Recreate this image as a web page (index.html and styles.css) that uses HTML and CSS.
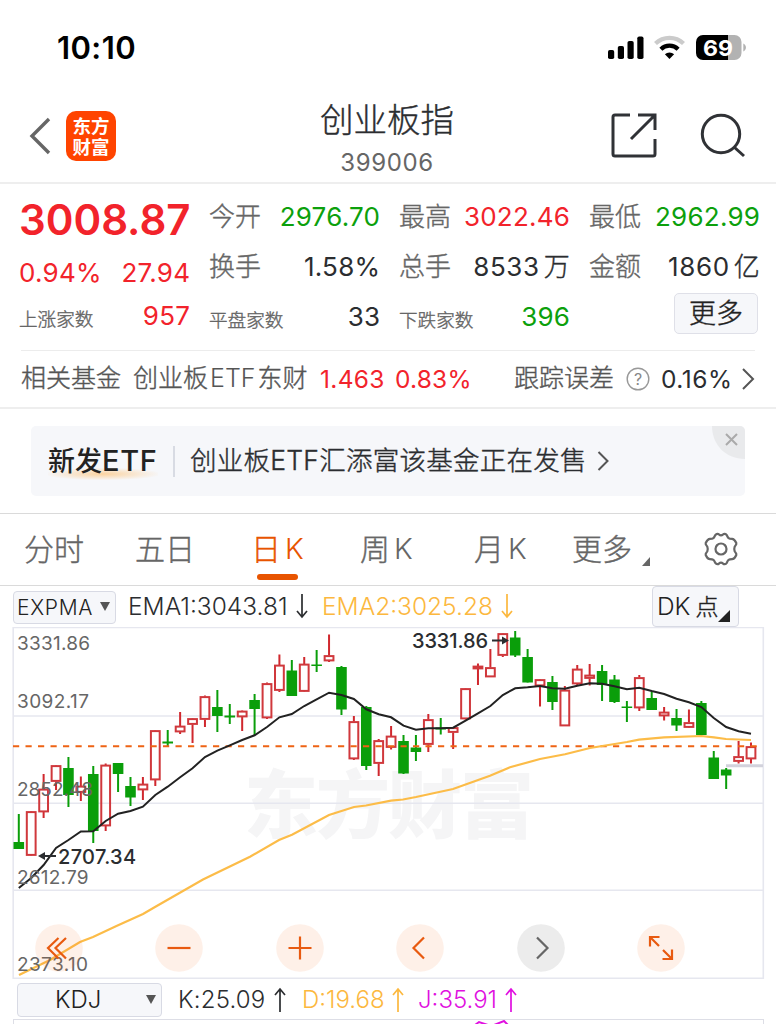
FILE: index.html
```html
<!DOCTYPE html>
<html lang="zh-CN">
<head>
<meta charset="utf-8">
<title>创业板指 399006</title>
<link rel="stylesheet" href="styles.css">
</head>
<body>
<div class="status">
  <span class="clock">10:10</span>
  <svg class="status-icons" width="140" height="26" viewBox="0 0 140 26">
    <rect x="0" y="15" width="6.2" height="9" rx="1.8"/>
    <rect x="9.8" y="11" width="6.2" height="13" rx="1.8"/>
    <rect x="19.5" y="6" width="6.2" height="18" rx="1.8"/>
    <rect x="29.3" y="1.5" width="6.2" height="22.5" rx="1.8"/>
    <g fill="none" stroke-width="4.2">
      <path d="M47.5 8.6a20 20 0 0 1 28 0" stroke="#cbcbcb"/>
      <path d="M52.9 14.2a12.2 12.2 0 0 1 17.2 0" stroke="#000"/>
    </g>
    <path d="M61.5 24l-4.6-4.7a6.7 6.7 0 0 1 9.2 0z"/>
    <path d="M95 0h25v25h-25a7 7 0 0 1-7-7V7a7 7 0 0 1 7-7z"/>
    <path d="M120 0h6.500a7 7 0 0 1 7 7v11a7 7 0 0 1-7 7h-6.500z" fill="#b2b2b2"/>
    <path d="M135.300 8.500c3.500 1.500 3.500 6.500 0 8z" fill="#b2b2b2"/>
    <text x="110" y="20.700" class="battery" textLength="30" lengthAdjust="spacingAndGlyphs">69</text>
  </svg>
</div>

<header class="nav">
  <svg class="back" width="24" height="38" viewBox="0 0 24 38"><path d="M20 2L3 19l17 17"/></svg>
  <div class="logo">东方<br>财富</div>
  <div class="title"><h1>创业板指</h1><p>399006</p></div>
  <svg class="share" width="46" height="46" viewBox="0 0 46 46"><path d="M19 2H4a2 2 0 0 0-2 2v37a2 2 0 0 0 2 2h38a2 2 0 0 0 2-2V26M27 2h17v15M43 3L20 26"/></svg>
  <svg class="search" width="46" height="46" viewBox="0 0 46 46"><circle cx="21" cy="21" r="18.700"/><path d="M34 34l10 9"/></svg>
</header>

<section class="quote">
  <div class="col first">
    <div class="price red">3008.87</div>
    <div class="cell change red"><b>0.94%</b><b>27.94</b></div>
    <div class="cell small"><i>上涨家数</i><b class="red">957</b></div>
  </div>
  <div class="col">
    <div class="cell"><i>今开</i><b class="green">2976.70</b></div>
    <div class="cell"><i>换手</i><b>1.58%</b></div>
    <div class="cell small"><i>平盘家数</i><b>33</b></div>
  </div>
  <div class="col">
    <div class="cell"><i>最高</i><b class="red">3022.46</b></div>
    <div class="cell"><i>总手</i><b class="unit">8533<em>万</em></b></div>
    <div class="cell small"><i>下跌家数</i><b class="green">396</b></div>
  </div>
  <div class="col">
    <div class="cell"><i>最低</i><b class="green">2962.99</b></div>
    <div class="cell"><i>金额</i><b class="unit">1860<em>亿</em></b></div>
    <div class="cell more-cell"><button class="more">更多</button></div>
  </div>
</section>

<section class="fund">
  <span class="f-label">相关基金</span>
  <span class="f-name">创业板<em>ETF</em>东财</span>
  <span class="f-num red">1.463</span>
  <span class="f-pct red">0.83%</span>
  <span class="f-track">跟踪误差</span>
  <svg class="help" width="24" height="24" viewBox="0 0 24 24"><circle cx="12" cy="12" r="10.800"/><text x="12" y="17.500">?</text></svg>
  <span class="f-err">0.16%</span>
  <svg class="chev" width="14" height="24" viewBox="0 0 14 24"><path d="M2 2l10 10L2 22"/></svg>
</section>

<section class="promo">
  <div class="banner">
    <strong>新发<em>ETF</em></strong>
    <span class="bar"></span>
    <span class="promo-text">创业板ETF汇添富该基金正在发售</span>
    <svg class="chev" width="12" height="22" viewBox="0 0 12 22"><path d="M1.500 2l9 9-9 9"/></svg>
    <svg class="close" width="33" height="33" viewBox="0 0 33 33"><path class="corner" d="M0 0h28a5 5 0 0 1 5 5v28C14 33 0 19 0 0z"/><path class="x" d="M14 8l11 11M25 8L14 19"/></svg>
  </div>
</section>

<nav class="tabs">
  <span>分时</span>
  <span>五日</span>
  <span class="active">日<em>K</em></span>
  <span>周<em>K</em></span>
  <span>月<em>K</em></span>
  <span>更多<svg class="tri" width="8" height="9" viewBox="0 0 8 9"><path d="M8 0v9H0z"/></svg></span>
  <svg class="gear" width="36" height="36" viewBox="0 0 36 36"><path d="M12.200 4.200c1.500-1.900 3-1.500 3.700-.8 1.300 1.100 2.900 1.100 4.200 0 .9-.8 2.500-1 3.700.8 1.200 2.700 1.800 3.600 5.300 3.600 2.300 0 3.300 2.200 4.200 4.200.5 1.700-1.100 2.500-1.600 3.600-.6 1.600-.6 3.200 0 4.800.5 1.100 2.100 1.900 1.600 3.600-.9 2-1.900 4.200-4.200 4.200-3.500 0-4.100.9-5.300 3.600-1.200 1.800-2.800 1.600-3.700.8-1.300-1.100-2.900-1.100-4.200 0-.7.700-2.200 1.100-3.700-.8C11 29.100 10.400 28.200 6.900 28.200c-2.300 0-3.300-2.200-4.200-4.200-.5-1.700 1.100-2.500 1.600-3.600.6-1.600.6-3.200 0-4.800C3.800 14.500 2.200 13.700 2.700 12c.9-2 1.900-4.200 4.200-4.200 3.500 0 4.100-.9 5.300-3.600z"/><circle cx="18" cy="18" r="5.500"/></svg>
</nav>

<section class="indicator">
  <span class="select expma">EXPMA<svg width="10" height="10" viewBox="0 0 10 10"><path d="M0 0h10L5 9z"/></svg></span>
  <span class="ema1">EMA1:3043.81</span>
  <svg class="arrow" width="12" height="26" viewBox="0 0 12 26"><path d="M6 1v23M1 18l5 6 5-6"/></svg>
  <span class="ema2">EMA2:3025.28</span>
  <svg class="arrow gold" width="12" height="26" viewBox="0 0 12 26"><path d="M6 1v23M1 18l5 6 5-6"/></svg>
  <span class="dk">DK<em>点</em><svg width="12" height="12" viewBox="0 0 12 12"><path d="M12 0v12H0z"/></svg></span>
</section>

<section class="chart-wrap">
  <svg id="chart" class="chart" width="776" height="353" viewBox="0 627 776 353"></svg>
  <div class="controls">
    <svg viewBox="0 0 48 48"><circle cx="24" cy="24" r="23.800"/><path d="M23.500 14L13 24l10.500 10.500M31 14L20.500 24 31 34.500"/></svg>
    <svg viewBox="0 0 48 48"><circle cx="24" cy="24" r="23.800"/><path d="M12.500 24h23"/></svg>
    <svg viewBox="0 0 48 48"><circle cx="24" cy="24" r="23.800"/><path d="M12.500 24h23M24 12.500v23"/></svg>
    <svg viewBox="0 0 48 48"><circle cx="24" cy="24" r="23.800"/><path d="M28 13.500L17.500 24 28 34.500"/></svg>
    <svg class="off" viewBox="0 0 48 48"><circle cx="24" cy="24" r="23.800"/><path d="M20 13.500L30.500 24 20 34.500"/></svg>
    <svg viewBox="0 0 48 48"><circle cx="24" cy="24" r="23.800"/><path d="M22.500 13H13v9.500M13 13l9 9M35 25.500V35h-9.500M35 35l-9-9"/></svg>
  </div>
</section>

<section class="kdj-row">
  <span class="select kdj">KDJ<svg width="10" height="10" viewBox="0 0 10 10"><path d="M0 0h10L5 9z"/></svg></span>
  <span class="k">K:25.09</span>
  <svg class="arrow" width="12" height="26" viewBox="0 0 12 26"><path d="M6 25V2M1 8l5-6 5 6"/></svg>
  <span class="d">D:19.68</span>
  <svg class="arrow gold" width="12" height="26" viewBox="0 0 12 26"><path d="M6 25V2M1 8l5-6 5 6"/></svg>
  <span class="j">J:35.91</span>
  <svg class="arrow magenta" width="12" height="26" viewBox="0 0 12 26"><path d="M6 25V2M1 8l5-6 5 6"/></svg>
</section>
<div class="subchart"><svg width="40" height="5" viewBox="0 0 40 5"><path d="M1 5l4-3 9 3M20 5l10-4 4 4"/></svg></div>
<script src="chart.js"></script>
</body>
</html>
```
FILE: styles.css
```css
* { box-sizing: border-box; }
html, body { margin: 0; padding: 0; }
body {
  width: 776px; height: 1024px; overflow: hidden; background: #fff; color: #2b2d30;
  font-family: Inter, "Noto Sans CJK SC", sans-serif; font-weight: 400;
}
i, em { font-style: normal; font-weight: inherit; }
svg { display: block; flex: none; }
span { white-space: nowrap; }
.red { color: #f2232b; }
.green { color: #0ca00c; }
.title h1, .cell i, .unit em, .more, .f-label, .f-name, .f-track, .promo-text, .tabs span, .dk em { -webkit-text-stroke: .4px currentColor; }
.f-name em, .tabs em { -webkit-text-stroke: 0; }

.status { height: 96px; display: flex; justify-content: space-between; padding: 0 28px 0 57px; }
.clock { font-size: 31px; font-weight: 600; line-height: 96px; color: #000; letter-spacing: .4px; }
.status-icons { margin-top: 35px; }
.battery { font: 700 22px Inter, sans-serif; fill: #fff; text-anchor: middle; }

.nav { height: 88px; display: flex; border-bottom: 2px solid #eee; padding-left: 29px; }
.back { margin-top: 21px; }
.back path { fill: none; stroke: #666; stroke-width: 3.4; }
.logo {
  width: 50px; height: 50px; margin: 15px 0 0 13px; border-radius: 10px; background: #ff4400; color: #fff;
  text-align: center; padding-top: 4px;
  font: 700 18.500px/20.500px "Noto Sans CJK SC", sans-serif;
}
.title { width: 180px; margin-left: 181px; text-align: center; }
.title h1 { margin: 3px 0 0; font-size: 33.500px; font-weight: 300; line-height: 42px; }
.title p { margin: 7px 0 0; font-size: 24px; line-height: 30px; color: #666; letter-spacing: .6px; }
.share { margin: 17px 0 0 134px; }
.search { margin: 17px 0 0 43px; }
.share path, .search * { fill: none; stroke: #303236; stroke-width: 3; }

.quote { height: 166px; display: grid; grid-template-columns: repeat(4, 170px); column-gap: 20px; padding: 8px 0 0 20px; }
.cell { height: 50px; display: flex; justify-content: space-between; font-size: 26px; line-height: 50px; }
.cell b { font-weight: 400; letter-spacing: .25px; margin-right: -.25px; }
.cell i { color: #666; font-weight: 300; }
.col:not(.first) .cell:not(.small) i { margin-left: -1px; }
.cell.small i { font-size: 18.600px; line-height: 57px; margin-left: -1px; }
.unit { display: flex; gap: 4px; }
.unit em { font-weight: 300; }
.cell b.unit { letter-spacing: .6px; }
.price { height: 57px; margin-left: -1px; font-size: 42px; font-weight: 600; line-height: 56px; letter-spacing: 0; }
.change { height: 42px; line-height: 48px; margin-left: -1px; }
.first .small { height: 50px; }
.cell.small { margin-top: 0; line-height: 49px; }
.more-cell { justify-content: flex-end; padding: 1px 2px 0 0; }
.more {
  width: 84px; height: 41px; padding: 0; border: 1.500px solid #dfe0e8; border-radius: 5px; background: #f6f7fa;
  font: 300 27px/37px Inter, "Noto Sans CJK SC", sans-serif; color: #222;
}

.fund {
  height: 59px; display: flex; align-items: center; border-bottom: 2px solid #eee; padding-left: 21px;
  font-size: 24.500px; line-height: 30px; background: linear-gradient(#ececec, #ececec) 21px 0 / 734px 1px no-repeat;
}
.f-label, .f-name, .f-track { font-size: 25px; font-weight: 300; color: #555; margin-top: -2px; }
.f-name { margin-left: 12px; width: 175px; }
.f-name em { margin: 0 2px; font-weight: 350; }
.f-num { margin-left: 12px; width: 64px; letter-spacing: .3px; }
.f-pct { margin-left: 11px; width: 76px; letter-spacing: .2px; }
.f-track { margin-left: 43px; }
.help { margin-left: 12px; }
.help circle { fill: none; stroke: #999; stroke-width: 1.400; }
.help text { font: 400 16px Inter, sans-serif; fill: #888; text-anchor: middle; }
.f-err { margin-left: 11px; width: 72px; letter-spacing: .5px; }
.chev { margin-left: 8px; }
.chev path { fill: none; stroke: #555; stroke-width: 2; }

.promo { height: 105px; padding: 17px 31px 0; border-bottom: 1px solid #dadada; }
.banner {
  position: relative; width: 714px; height: 70px; border-radius: 5px; background: #f6f7fa;
  display: flex; align-items: center; padding-left: 17px; font-size: 26.500px;
}
.banner strong {
  font-size: 27px; font-weight: 500; width: 111px; line-height: 36px; color: #222;
  background: radial-gradient(ellipse at center, #fbd3a0 0, rgba(251, 211, 160, 0) 75%) 0 100% / 110px 12px no-repeat;
}
.banner strong em { font-size: 29px; letter-spacing: .7px; }
.bar { width: 2px; height: 31px; margin-left: 14px; background: #d8dbe3; }
.promo-text { margin-left: 15px; width: 399px; font-weight: 300; letter-spacing: .25px; line-height: 36px; margin-top: -3px; }
.close { position: absolute; top: 0; right: 0; }
.corner { fill: #e9eaec; }
.x { stroke: #aaa; stroke-width: 2; }

.tabs {
  height: 72px; border-bottom: 1px solid #dadada; padding-left: 24px; color: #666; font-size: 30px; font-weight: 300;
  display: grid; grid-template-columns: 111px 116px 109px 114px 98px 131px 36px; align-items: start;
}
.tabs span { display: flex; line-height: 70px; height: 66px; gap: 4px; }
.tabs em { font-size: 29px; font-weight: 350; }
.tabs .active { color: #e85400; width: 51px; position: relative; }
.active::after { content: ""; position: absolute; left: 6px; bottom: 0; width: 41px; height: 6px; border-radius: 3px; background: #e85400; }
.tri { margin: 43px 0 0 6px; fill: #666; }
.gear { margin-top: 17px; fill: none; stroke: #666; stroke-width: 2.200; }

.indicator { height: 40px; display: flex; align-items: center; padding-left: 13px; font-size: 24.500px; font-weight: 350; }
.select {
  border: 1.500px solid #d8dae4; border-radius: 4px; background: #f6f7fa; display: flex; align-items: center; justify-content: space-between;
  color: #222; font-weight: 350;
}
.select svg, .dk svg { fill: #555; }
.expma { width: 103px; height: 33px; margin-top: 2px; padding: 0 5px 0 3px; font-size: 21px; letter-spacing: .7px; }
.ema1 { margin-left: 12px; width: 162px; }
.arrow { margin-left: 6px; fill: none; stroke: #2b2d30; stroke-width: 1.700; }
.gold { stroke: #fcb83e; }
.magenta { stroke: #e010e0; }
.ema2, .d { color: #fcb83e; }
.ema2 { margin-left: 14px; width: 173px; }
.dk {
  margin-left: 139px; width: 87px; height: 41px; border: 1.500px solid #d8dae4; border-radius: 4px; background: #f6f7fa;
  display: flex; align-items: center; padding-left: 4px; color: #222;
}
.dk em { margin: -2px 0 0 5px; font-size: 23px; font-weight: 300; }
.dk svg { margin-top: 20px; fill: #222; }

.chart-wrap { position: relative; height: 353px; margin-top: 1px; }
.controls { position: absolute; left: 35px; top: 297px; width: 650px; display: flex; justify-content: space-between; }
.controls svg { width: 48px; height: 48px; }
.controls circle { fill: #fa7020; fill-opacity: .1; }
.controls path { fill: none; stroke: #e85a10; stroke-width: 2.200; }
.controls .off circle { fill: #ececec; fill-opacity: 1; }
.controls .off path { stroke: #666; }
.axis text { font: 400 19px Inter, sans-serif; fill: #666; }
.mark { font: 500 20px Inter, sans-serif; fill: #2b2d30; }
.watermark { font: 900 74px "Noto Sans CJK SC", sans-serif; fill: #f5f5f6; }

.kdj-row { height: 39px; display: flex; align-items: center; padding-left: 17px; font-size: 24px; font-weight: 350; }
.kdj { width: 145px; height: 34px; padding: 0 5px 0 37px; font-size: 24px; }
.k { margin-left: 16px; width: 90px; letter-spacing: .2px; }
.d { margin-left: 16px; width: 86px; }
.j { margin-left: 14px; width: 81px; color: #e010e0; }
.kdj-row .gold { margin-left: 4px; }
.subchart { margin-left: 13px; width: 751px; height: 8px; border: 1px solid #dddee6; border-bottom: 0; }
.subchart svg { margin-left: 460px; fill: none; stroke: #e010e0; stroke-width: 2; }
```
FILE: chart.js
```js
// Each candle: direction, high, body top, body bottom, low (vertical chart units)
const candles = [
  ["g",814,842,849,849],["r",811,811.5,855.5,856],["r",774,789,812,818],["r",765,765.5,781.5,790],
  ["g",757,768,795,807],["r",776.5,786,792.5,801],["g",766,774,831,843],["r",763.5,765,826,831],
  ["g",763,763,774,792],["g",777,786,797.5,806],["r",777,784,790,800],["r",730,730.5,780,786],
  ["g",730,741.5,743.5,746],["r",712,726,732,734],["r",718,718.5,724.5,743],["r",695.5,696.5,719.5,727],
  ["g",690,707,716,732],["g",704,715.5,717.5,724],["r",710.5,711,717,731],["g",694,700,709,735],
  ["r",682.5,683.5,718,719],["r",654.5,665,690.5,692],["g",660,670.5,696,696],["r",657,664,691.5,692],
  ["g",650,664.5,666,672],["r",634.5,655.5,661,662],["g",666,667,709.5,715],["r",716,721.5,759,760],
  ["g",706,707,766,770],["r",739,740.5,763.5,776],["r",726,736,747.5,749.5],["g",735,741,773.5,774],
  ["g",735,747.5,752,761],["r",714,719.5,744.5,752],["g",718,727.5,729.5,734.5],["r",727,727.5,732.5,749],
  ["r",688,688.5,719,719.5],["r",663.5,666,669,685],["r",649,667.5,677,677],["r",633,633.5,655.5,657],
  ["g",631,637.5,655.5,657],["g",649,657,682.5,682.5],["r",679,679.5,686,706.5],["g",676,682,702,710],
  ["r",686,690,726,726],["r",665,669,684,685],["r",664,675,678.5,685.5],["g",665,671,685,701],
  ["g",675,679.5,702,703],["g",701,706.5,708,722],["r",675,677.5,708,711],["g",691.5,698,710,710],
  ["r",707,712,716,720.5],["g",709,718,725.5,731],["r",709.5,722.5,727.5,728],["g",701,703,735,735.5],
  ["g",751,757.5,779,779],["g",768,769.5,775.5,789],["r",741,756.5,761.5,763.5],["r",742.5,746.5,759,763.5]
];
const ema1 = [888,878,865,848,840,831.5,831.3,821,813.7,811,806.7,795,786.7,777.3,768.3,757,750.7,745.3,740,735.3,
  727,717.3,714,706,699.3,692.7,695,699,709.3,714.3,717.3,725.7,729.7,728.3,728.3,727.7,720.7,713.3,706,695,
  688.3,687.3,686,688.3,688.7,685.7,683.3,683.7,686.3,689.3,687.7,691,694,698.7,702.3,707,718,727,731.3,733.7];
const ema2 = "19,975 50,960 80,942 93,937 117,925.7 143,914 155,907 203,879.5 250,856.7 279,840 292,834.7 329,815 354,807 366,805.500 391,800.7 403,799.500 416,797 453,789 490,775.7 510,767.3 540,759 565,754.3 590,748 627,742 639,739.7 664,737.3 701,736 714,737.3 726,739 751,740";
const x = i => 18.8 + i * 12.41;

let s = '<text class="watermark" x="244" y="832" textLength="290">东方财富</text>';
s += '<g stroke="#e6e7ef" stroke-width="1.6" fill="none">';
for (const y of [716, 803.2, 890.3]) s += `<path d="M13 ${y}H763"/>`;
s += '<path d="M13.200 627.500H763.300V978.300H13.200z"/></g>';
s += '<path d="M726 765.700H763" stroke="#d2d2dc" stroke-width="3"/>';
candles.forEach(([kind, high, top, bottom, low], i) => {
  const cx = x(i);
  if (kind === "g") {
    s += `<path d="M${cx} ${high}V${low}" stroke="#0a9e0a" stroke-width="2"/>`;
    s += `<rect x="${cx - 5.3}" y="${top}" width="10.6" height="${bottom - top}" fill="#0a9e0a"/>`;
  } else {
    s += `<path d="M${cx} ${high}V${top}M${cx} ${bottom}V${low}" stroke="#d0282e" stroke-width="2"/>`;
    s += `<rect x="${cx - 4.4}" y="${top + .6}" width="8.8" height="${Math.max(1, bottom - top - 1.2)}" fill="none" stroke="#d0383c" stroke-width="2"/>`;
  }
});
s += '<path d="M13 746.300H763" stroke="#ee6314" stroke-width="2" stroke-dasharray="6.200 6.300"/>';
s += `<polyline points="${ema1.map((y, i) => x(i) + "," + y).join(" ")}" fill="none" stroke="#222" stroke-width="2"/>`;
s += `<polyline points="${ema2}" fill="none" stroke="#fcbc48" stroke-width="2.200"/>`;
s += '<g class="axis">';
[["3331.86",649.5,73],["3092.17",708,72],["2852.48",796,76],["2612.79",883.7,71.500],["2373.10",971,71]]
  .forEach(([t, y, w]) => { s += `<text x="17" y="${y}" textLength="${w}">${t}</text>`; });
s += '</g>';
s += '<path d="M40 856H56M492 640.500H504" stroke="#2b2d30" stroke-width="2"/>';
s += '<path d="M38 856l7-4v8zM509 640.500l-7-4v8z" fill="#2b2d30"/>';
s += '<text class="mark" x="58" y="863.500" textLength="78">2707.34</text>';
s += '<text class="mark" x="412" y="648" textLength="76">3331.86</text>';
document.getElementById("chart").innerHTML = s;
```
